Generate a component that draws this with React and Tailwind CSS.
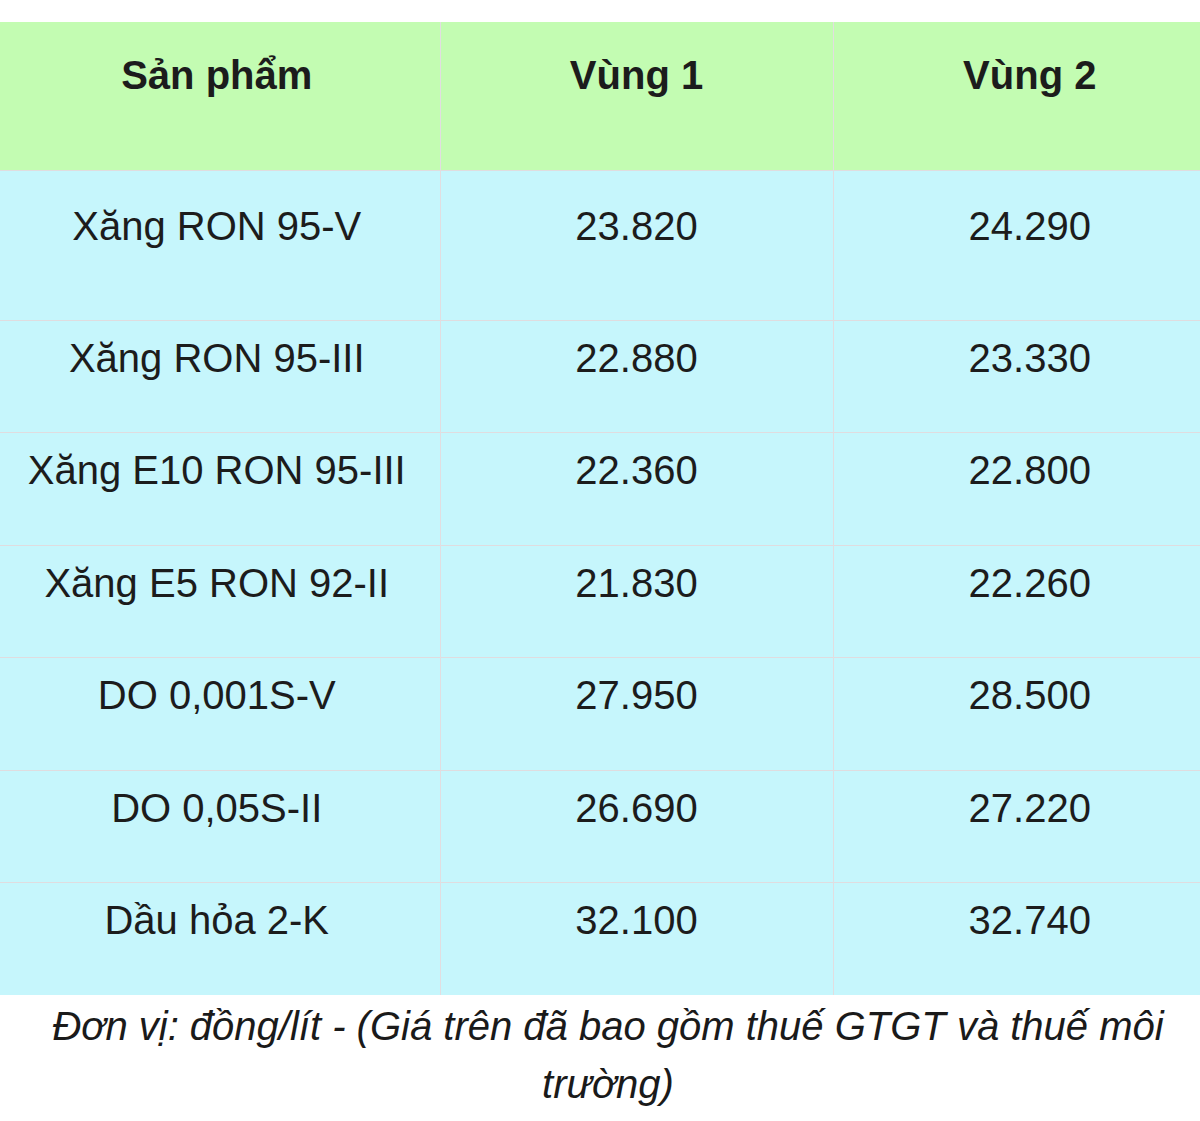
import React from "react";

const rows = [
  { name: "Xăng RON 95-V", v1: "23.820", v2: "24.290", tall: true },
  { name: "Xăng RON 95-III", v1: "22.880", v2: "23.330" },
  { name: "Xăng E10 RON 95-III", v1: "22.360", v2: "22.800" },
  { name: "Xăng E5 RON 92-II", v1: "21.830", v2: "22.260" },
  { name: "DO 0,001S-V", v1: "27.950", v2: "28.500" },
  { name: "DO 0,05S-II", v1: "26.690", v2: "27.220" },
  { name: "Dầu hỏa 2-K", v1: "32.100", v2: "32.740" },
];

const App = () => {
  return (
    <div className="w-[1200px] h-[1121px] bg-white overflow-hidden pt-[22px] font-['Liberation_Sans',Arial,sans-serif] text-[#1c1c1c]">
      <table className="table-fixed border-collapse w-[1226px]">
        <colgroup>
          <col className="w-[440px]" />
          <col className="w-[393px]" />
          <col className="w-[393px]" />
        </colgroup>
        <thead>
          <tr className="bg-[#c3fcb2] h-[148px]">
            <th className="align-top pt-[30px] pr-[6px] text-[40px] leading-[46px] font-bold border-r border-[#e2dde0]">
              Sản phẩm
            </th>
            <th className="align-top pt-[30px] text-[40px] leading-[46px] font-bold border-r border-[#e2dde0]">
              Vùng 1
            </th>
            <th className="align-top pt-[30px] text-[40px] leading-[46px] font-bold">
              Vùng 2
            </th>
          </tr>
        </thead>
        <tbody>
          {rows.map((el) => (
            <tr
              key={el.name}
              className={`bg-[#c6f6fc] border-t border-[#e0dcdf] ${
                el.tall ? "h-[150px]" : "h-[112.5px]"
              }`}
            >
              <td
                className={`align-top text-center pr-[6px] text-[40px] leading-[46px] border-r border-[#e2dde0] ${
                  el.tall ? "pt-[32px]" : "pt-[14px]"
                }`}
              >
                {el.name}
              </td>
              <td
                className={`align-top text-center text-[40px] leading-[46px] border-r border-[#e2dde0] ${
                  el.tall ? "pt-[32px]" : "pt-[14px]"
                }`}
              >
                {el.v1}
              </td>
              <td
                className={`align-top text-center text-[40px] leading-[46px] ${
                  el.tall ? "pt-[32px]" : "pt-[14px]"
                }`}
              >
                {el.v2}
              </td>
            </tr>
          ))}
        </tbody>
      </table>
      <p className="w-[1200px] pl-[36px] pr-[20px] pt-[2px] text-center italic text-[40px] leading-[58px] text-[#1a1a1a]">
        Đơn vị: đồng/lít - (Giá trên đã bao gồm thuế GTGT và thuế môi trường)
      </p>
    </div>
  );
};

export default App;
